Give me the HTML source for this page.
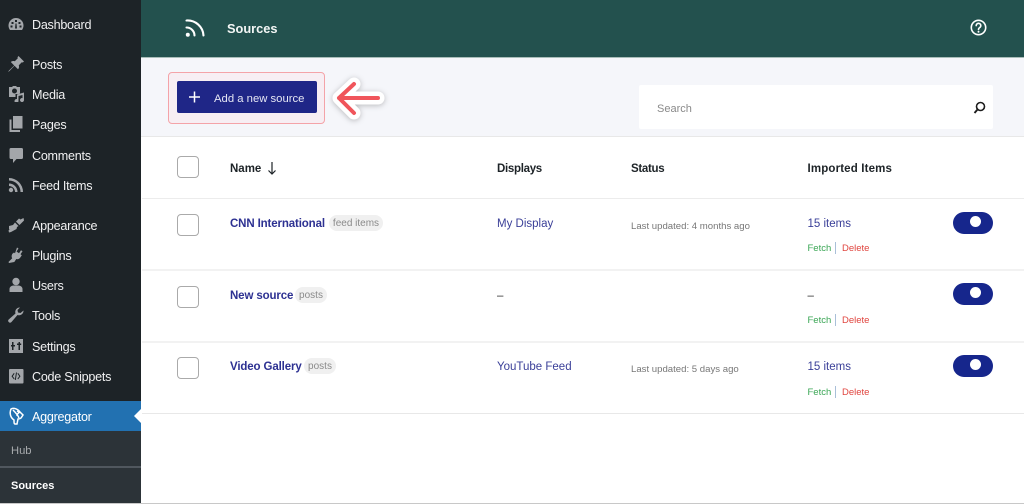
<!DOCTYPE html>
<html>
<head>
<meta charset="utf-8">
<style>
html,body{margin:0;padding:0;width:1024px;height:504px;overflow:hidden;background:#fff;font-family:"Liberation Sans",sans-serif}
.t{position:absolute;white-space:nowrap;line-height:16px;height:16px}
.b{position:absolute}
.m{left:32px;font-size:12.6px;letter-spacing:-.27px;color:#f0f0f1;margin-top:1px}
.i{position:absolute;left:8px;width:16px;height:16px;fill:#a3a6aa}
.cb{position:absolute;left:177px;width:20px;height:20px;border:1px solid #aaa;border-radius:4px;background:#fff}
.l{position:absolute;left:142px;width:882px;height:1px;background:#ececec}
.h{font-size:11.5px;font-weight:bold;color:#1d2327;margin-top:1px}
.a{color:#3a3f98;margin-top:1px}
.n{left:230px;font-size:11.5px;font-weight:bold;color:#2d3192;letter-spacing:-.13px;margin-top:1px}
.p{position:absolute;height:16px;line-height:17px;border-radius:8px;background:#f0f0f0;color:#8a8a8a;font-size:10px;text-align:center}
.f{left:807.5px;font-size:9.5px;color:#3aa655;margin-top:2px}
.s{position:absolute;left:835px;width:1px;height:12px;background:#a9bfd8}
.d{left:842px;font-size:9.5px;color:#e0453f;margin-top:2px}
.tg{position:absolute;left:953px;width:40px;height:22px;border-radius:11px;background:#16268c}
.tg i{position:absolute;left:17px;top:4px;width:11px;height:11px;border-radius:50%;background:#fff}
.u{left:631px;font-size:9.6px;color:#777;margin-top:1px}
</style>
</head>
<body>
<div class="b" style="left:0;top:0;width:141px;height:504px;background:#1d2327"></div>

<svg class="i" style="top:16px" viewBox="0 0 16 16"><path d="M8 2a7.500 7.500 0 0 0-7.500 7.500c0 1.800.6 3.200 1.500 4.500h12c.9-1.300 1.500-2.700 1.500-4.500A7.500 7.500 0 0 0 8 2zM7 4h2v2H7zM3.500 6h2v2h-2zM10.500 6h2v2h-2zM2.500 9.500h2v2h-2zM11.500 9.500h2v2h-2zM7 12.500l.5-5 1 0 .5 5z" fill-rule="evenodd"/></svg>
<div class="t m" style="top:16px">Dashboard</div>

<svg class="i" style="top:56px" viewBox="0 0 16 16"><path d="M10.500 0l5.500 5.500-1.200 1-1-.3-3 3c.5 1.800.2 3-.8 4L6.500 9.800 1.500 15 0 16l1-1.500 5.200-5L2.800 6c1-1 2.200-1.300 4-.8l3-3-.3-1z"/></svg>
<div class="t m" style="top:56px">Posts</div>

<svg class="i" style="top:86px" viewBox="0 0 16 16"><path d="M1 1h3l1-1h3l1 1h3v7H7.500v3H1zM6.500 2.500a2.500 2.500 0 1 0 0 5 2.500 2.500 0 0 0 0-5zM16 6.500V14a2 2 0 1 1-1.500-1.900V9L10.500 10v5a2 2 0 1 1-1.500-1.900V8.500z" fill-rule="evenodd"/></svg>
<div class="t m" style="top:86px">Media</div>

<svg class="i" style="top:116px" viewBox="0 0 16 16"><path d="M5 0h9.500v12.500H5zM1.500 3.500H3.500v10.500H12v2H1.500z"/></svg>
<div class="t m" style="top:116px">Pages</div>

<svg class="i" style="top:147px" viewBox="0 0 16 16"><path d="M3 1h10.500a1.500 1.500 0 0 1 1.500 1.500v8a1.500 1.500 0 0 1-1.500 1.500H8.500L5 16v-4H3a1.500 1.500 0 0 1-1.500-1.500v-8A1.500 1.500 0 0 1 3 1z"/></svg>
<div class="t m" style="top:147px">Comments</div>

<svg class="i" style="top:177px" viewBox="0 0 16 16"><circle cx="3" cy="13" r="2.200"/><path d="M1 6.500a8.500 8.500 0 0 1 8.500 8.500H7A6 6 0 0 0 1 9z"/><path d="M1 1a14 14 0 0 1 14 14h-2.500A11.500 11.500 0 0 0 1 3.500z"/></svg>
<div class="t m" style="top:177px">Feed Items</div>

<svg class="i" style="top:217px" viewBox="0 0 16 16"><path d="M15.500 1l.5 2.500-4.500 4.500-3.500-3.500L11 1.500l1.500 1zM7 5.500l3.500 3.500-1.500 1-.5 2L3 15 1 15.500l-.5-2 1.500-1.500-1 .5L1 9l4-1z"/></svg>
<div class="t m" style="top:217px">Appearance</div>

<svg class="i" style="top:247px" viewBox="0 0 16 16"><path d="M9 .5l1.500 1-2 3 2.500 1.700 2-3 1.500 1-2 3 1.300 1-1.500 2.300c-1 1.500-2.500 2-4 1.500l-2 3L1 16l-.5-1 3.700-3.700c-.8-1.300-.8-3 .2-4.500L6 5.500l1 .7z"/></svg>
<div class="t m" style="top:247px">Plugins</div>

<svg class="i" style="top:277px" viewBox="0 0 16 16"><circle cx="8" cy="4.500" r="3.700"/><path d="M1.500 15v-3c0-2 2-3.500 4-3.500h5c2 0 4 1.500 4 3.500v3z"/></svg>
<div class="t m" style="top:277px">Users</div>

<svg class="i" style="top:307px" viewBox="0 0 16 16"><path d="M15.500 3.500a4.500 4.500 0 0 1-6 4.500L3.500 15a1.800 1.800 0 0 1-2.800-2.500L7.500 6.500A4.500 4.500 0 0 1 12 .5L9.500 3l.5 2.500 2.500.5z"/></svg>
<div class="t m" style="top:307px">Tools</div>

<svg class="i" style="top:338px" viewBox="0 0 16 16"><path fill-rule="evenodd" d="M1 1h14v14H1zM4 4v3H3v1.500h1V12h1.500V8.500H7V7H5.500V4zM10.500 4v1.500H9V7h1.500v5H12V7h1.200V5.500H12V4z"/></svg>
<div class="t m" style="top:338px">Settings</div>

<svg class="i" style="top:368px" viewBox="0 0 16 16"><path fill-rule="evenodd" d="M2 1h12.500a1 1 0 0 1 1 1v12.500a1 1 0 0 1-1 1H2a1 1 0 0 1-1-1V2a1 1 0 0 1 1-1zM5.800 5L3.500 8.200l2.300 3.100.8-.6-1.800-2.500 1.800-2.600zM8 4.500L6.800 12h1L9 4.500zM10.200 5l-.8.600 1.900 2.600-1.900 2.500.8.600 2.300-3.100z"/></svg>
<div class="t m" style="top:368px">Code Snippets</div>

<div class="b" style="left:0;top:401px;width:141px;height:30px;background:#2271b1"></div>
<svg class="b" style="left:134px;top:408px" width="8" height="16" viewBox="0 0 8 16"><path d="M8 0L0 8l8 8z" fill="#fff"/></svg>
<svg class="b" style="left:8px;top:407px;width:17px;height:19px" viewBox="0 0 17 19" fill="none" stroke="#fff" stroke-width="1.500"><path d="M3 2c3-1.500 7 0 9 3l3 3-2 3c-1 1-2 1-3 1l-1 5H7c-1 0-1-2-1-4C3 11 1 7 3 2z"/><path d="M5 3c2 2 5 5 6 8M9 4l2 1M12 5c-2 1-3 2-3 4"/></svg>
<div class="t m" style="top:408px;color:#fff">Aggregator</div>

<div class="b" style="left:0;top:431px;width:141px;height:73px;background:#2c3338"></div>
<div class="b" style="left:0;top:466px;width:141px;height:2px;background:#50575e"></div>
<div class="t" style="left:11px;top:443px;font-size:11.2px;color:#a7aaad">Hub</div>
<div class="t" style="left:11px;top:478px;font-size:11px;font-weight:bold;color:#fff">Sources</div>

<div class="b" style="left:141px;top:0;width:883px;height:57px;background:#23514e"></div>
<div class="b" style="left:141px;top:57px;width:883px;height:80px;background:#f5f6fa"></div>
<div class="b" style="left:141px;top:57px;width:883px;height:1px;background:#a9bdb9"></div>
<div class="b" style="left:141px;top:136px;width:883px;height:1px;background:#e8e8e8"></div>

<svg class="b" style="left:185px;top:18px" width="20" height="20" viewBox="0 0 20 20" fill="none" stroke="#fff" stroke-width="2.100" stroke-linecap="round"><circle cx="2.800" cy="16.800" r="2" fill="#fff" stroke="none"/><path d="M1.500 9.500a8 8 0 0 1 8 8"/><path d="M1.500 2.500a16 16 0 0 1 17 15"/></svg>
<div class="t" style="left:227px;top:21px;font-size:12.8px;font-weight:bold;color:#f3f6f5">Sources</div>
<svg class="b" style="left:970px;top:19px" width="17" height="17" viewBox="0 0 17 17" fill="none" stroke="#fff" stroke-width="1.600"><circle cx="8.500" cy="8.500" r="7.200"/><path d="M6.200 6.600a2.300 2.300 0 1 1 3.600 1.900c-.9.600-1.300 1-1.300 2" stroke-linecap="round"/><circle cx="8.500" cy="12.700" r="1" fill="#fff" stroke="none"/></svg>

<div class="b" style="left:168px;top:72px;width:155px;height:50px;border:1px solid #f4a3a8;border-radius:4px;background:#f7eef3"></div>
<div class="b" style="left:177px;top:81px;width:140px;height:32px;border-radius:2px;background:#1f2687"></div>
<svg class="b" style="left:189px;top:91px" width="11" height="12" viewBox="0 0 11 12" stroke="#fff" stroke-width="1.500"><path d="M5.500 .5v11M0 6h11"/></svg>
<div class="t" style="left:214px;top:91px;font-size:11.300px;color:#e6e7f4">Add a new source</div>

<svg class="b" style="left:328px;top:72px;filter:drop-shadow(0 1px 3px rgba(0,0,0,.25))" width="60" height="54" viewBox="0 0 60 54" fill="none" stroke-linecap="round" stroke-linejoin="round"><path d="M26 12L11 26l15 15M11 26h39" stroke="#fff" stroke-width="13"/><path d="M26 12L11 26l15 15M11 26h39" stroke="#f0555b" stroke-width="4"/></svg>

<div class="b" style="left:639px;top:85px;width:354px;height:44px;border-radius:2px;background:#fff"></div>
<div class="t" style="left:657px;top:101px;font-size:11px;color:#8a8a8a">Search</div>
<svg class="b" style="left:973px;top:101px" width="13" height="13" viewBox="0 0 13 13" fill="none" stroke="#1d1d1d" stroke-width="1.600"><circle cx="7.500" cy="5.500" r="4"/><path d="M4.500 8.500L1.500 12" stroke-width="1.900"/></svg>

<div class="cb" style="top:156px"></div>
<div class="t h" style="left:230px;top:160px">Name</div>
<svg class="b" style="left:267px;top:162px" width="10" height="13" viewBox="0 0 10 13" fill="none" stroke="#1d2327" stroke-width="1.200"><path d="M5 0v12M1.500 8.500L5 12l3.500-3.500"/></svg>
<div class="t h" style="left:497px;top:160px;letter-spacing:-.3px">Displays</div>
<div class="t h" style="left:631px;top:160px;letter-spacing:-.3px">Status</div>
<div class="t h" style="left:807.500px;top:160px;letter-spacing:.15px">Imported Items</div>
<div class="l" style="top:198px"></div>

<div class="cb" style="top:214px"></div>
<div class="t n" style="top:215px">CNN International</div>
<div class="p" style="left:329px;top:215px;width:54px">feed items</div>
<div class="t a" style="left:497px;top:215px;font-size:11.5px">My Display</div>
<div class="t u" style="top:218px">Last updated: 4 months ago</div>
<div class="t a" style="left:807.500px;top:215px;font-size:11.5px">15 items</div>
<div class="t f" style="top:239px">Fetch</div><div class="s" style="top:242px"></div><div class="t d" style="top:239px">Delete</div>
<div class="tg" style="top:212px"><i></i></div>
<div class="l" style="top:269px;height:2px;background:#f2f2f2"></div>

<div class="cb" style="top:286px"></div>
<div class="t n" style="top:287px">New source</div>
<div class="p" style="left:295px;top:287px;width:32px">posts</div>
<div class="t" style="left:497px;top:288px;font-size:11.500px;color:#333">–</div>
<div class="t" style="left:807.500px;top:288px;font-size:11.500px;color:#333">–</div>
<div class="t f" style="top:311px">Fetch</div><div class="s" style="top:314px"></div><div class="t d" style="top:311px">Delete</div>
<div class="tg" style="top:283px"><i></i></div>
<div class="l" style="top:341px;height:2px;background:#f2f2f2"></div>

<div class="cb" style="top:357px"></div>
<div class="t n" style="top:358px">Video Gallery</div>
<div class="p" style="left:304px;top:358px;width:32px">posts</div>
<div class="t a" style="left:497px;top:358px;font-size:11.500px">YouTube Feed</div>
<div class="t u" style="top:361px">Last updated: 5 days ago</div>
<div class="t a" style="left:807.500px;top:358px;font-size:11.500px">15 items</div>
<div class="t f" style="top:383px">Fetch</div><div class="s" style="top:386px"></div><div class="t d" style="top:383px">Delete</div>
<div class="tg" style="top:355px"><i></i></div>
<div class="l" style="top:413px;height:1px;background:#e8e8e8"></div>

<div class="b" style="left:0;top:503px;width:1024px;height:1px;background:#c8c8c8"></div>
</body>
</html>
